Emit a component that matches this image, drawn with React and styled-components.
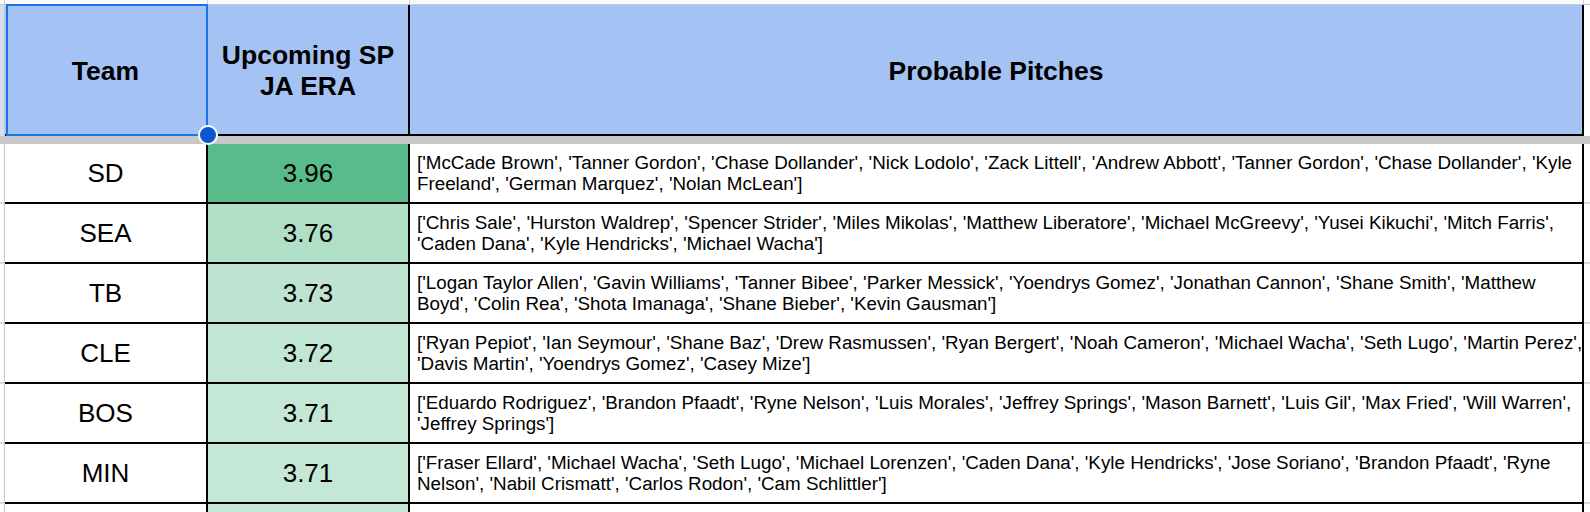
import React from 'react';
import styled, { createGlobalStyle } from 'styled-components';

const GlobalStyle = createGlobalStyle`
  *, *::before, *::after { box-sizing: border-box; }
  html, body { margin: 0; padding: 0; background: #fff; }
  body {
    font-family: "Liberation Sans", Arial, sans-serif;
    color: #000;
    overflow: hidden;
  }
`;

// gutter | Team | ERA | Probable Pitches | gutter
const COLS = '5px 203px 202px 1174px 6px';

const Sheet = styled.div`
  width: 1590px;
  height: 512px;
  overflow: hidden;
  display: flex;
  flex-direction: column;
`;

const Row = styled.div`
  display: grid;
  grid-template-columns: ${COLS};
  height: ${(p) => p.$height}px;
  flex: none;
`;

const Gutter = styled.div`
  background: ${(p) => p.$bg || '#fff'};
  border-right: ${(p) => (p.$left ? '1px solid #c7c7c7' : 'none')};
  border-bottom: ${(p) => (p.$tick ? '2px solid #dadada' : 'none')};
`;

const StripCell = styled.div`
  background: #fafafa;
  border-bottom: 1px solid #c7c7c7;
  border-right: ${(p) => (p.$line ? '1px solid #d0d0d0' : 'none')};
`;

const HeaderCell = styled.div`
  position: relative;
  display: flex;
  align-items: center;
  justify-content: center;
  text-align: center;
  padding-top: 3px;
  background: #a4c2f4;
  border-right: 2px solid #000;
  border-bottom: 2px solid #000;
  font-weight: bold;
  font-size: 26.5px;
  line-height: 31px;
`;

const Selection = styled.div`
  position: absolute;
  top: -1px;
  left: 1px;
  right: -2px;
  bottom: -2px;
  border: 2px solid #1a73e8;
  pointer-events: none;
  z-index: 2;
`;

const Handle = styled.div`
  position: absolute;
  right: -12px;
  bottom: -11px;
  width: 20px;
  height: 20px;
  border-radius: 50%;
  background: #0b57d0;
  border: 2px solid #fff;
`;

const FreezeBar = styled.div`
  flex: none;
  height: 8px;
  background: #c7c7c7;
`;

const Cell = styled.div`
  display: flex;
  align-items: center;
  justify-content: center;
  background: ${(p) => p.$bg || '#fff'};
  border-right: 2px solid #000;
  border-bottom: ${(p) => (p.$open ? 'none' : '2px solid #000')};
  font-size: 26px;
  line-height: 30px;
  overflow: hidden;
`;

const PitchCell = styled(Cell)`
  flex-direction: column;
  align-items: flex-start;
  justify-content: center;
  padding: 0 1px 0 7px;
  font-size: 18.8px;
  line-height: 21.5px;
`;

const Line = styled.span`
  display: block;
  white-space: nowrap;
`;

const rows = [
  {
    team: 'SD',
    era: '3.96',
    bg: '#57bb8a',
    pitches: [
      "['McCade Brown', 'Tanner Gordon', 'Chase Dollander', 'Nick Lodolo', 'Zack Littell', 'Andrew Abbott', 'Tanner Gordon', 'Chase Dollander', 'Kyle",
      "Freeland', 'German Marquez', 'Nolan McLean']",
    ],
  },
  {
    team: 'SEA',
    era: '3.76',
    bg: '#b0dfc8',
    pitches: [
      "['Chris Sale', 'Hurston Waldrep', 'Spencer Strider', 'Miles Mikolas', 'Matthew Liberatore', 'Michael McGreevy', 'Yusei Kikuchi', 'Mitch Farris',",
      "'Caden Dana', 'Kyle Hendricks', 'Michael Wacha']",
    ],
  },
  {
    team: 'TB',
    era: '3.73',
    bg: '#bee4d1',
    pitches: [
      "['Logan Taylor Allen', 'Gavin Williams', 'Tanner Bibee', 'Parker Messick', 'Yoendrys Gomez', 'Jonathan Cannon', 'Shane Smith', 'Matthew",
      "Boyd', 'Colin Rea', 'Shota Imanaga', 'Shane Bieber', 'Kevin Gausman']",
    ],
  },
  {
    team: 'CLE',
    era: '3.72',
    bg: '#c1e6d3',
    pitches: [
      "['Ryan Pepiot', 'Ian Seymour', 'Shane Baz', 'Drew Rasmussen', 'Ryan Bergert', 'Noah Cameron', 'Michael Wacha', 'Seth Lugo', 'Martin Perez',",
      "'Davis Martin', 'Yoendrys Gomez', 'Casey Mize']",
    ],
  },
  {
    team: 'BOS',
    era: '3.71',
    bg: '#c4e7d6',
    pitches: [
      "['Eduardo Rodriguez', 'Brandon Pfaadt', 'Ryne Nelson', 'Luis Morales', 'Jeffrey Springs', 'Mason Barnett', 'Luis Gil', 'Max Fried', 'Will Warren',",
      "'Jeffrey Springs']",
    ],
  },
  {
    team: 'MIN',
    era: '3.71',
    bg: '#c4e7d6',
    pitches: [
      "['Fraser Ellard', 'Michael Wacha', 'Seth Lugo', 'Michael Lorenzen', 'Caden Dana', 'Kyle Hendricks', 'Jose Soriano', 'Brandon Pfaadt', 'Ryne",
      "Nelson', 'Nabil Crismatt', 'Carlos Rodon', 'Cam Schlittler']",
    ],
  },
];

const App = () => {
  return (
    <>
      <GlobalStyle />
      <Sheet>
        <Row $height={5}>
          <StripCell $line />
          <StripCell $line />
          <StripCell $line />
          <StripCell $line />
          <StripCell />
        </Row>

        <Row $height={131}>
          <Gutter $left $bg="#d6dfec" />
          <HeaderCell>
            Team
            <Selection>
              <Handle />
            </Selection>
          </HeaderCell>
          <HeaderCell>
            Upcoming SP
            <br />
            JA ERA
          </HeaderCell>
          <HeaderCell>Probable Pitches</HeaderCell>
          <Gutter />
        </Row>

        <FreezeBar />

        {rows.map((r) => (
          <Row key={r.team} $height={60}>
            <Gutter $left $tick />
            <Cell>{r.team}</Cell>
            <Cell $bg={r.bg}>{r.era}</Cell>
            <PitchCell>
              {r.pitches.map((line) => (
                <Line key={line}>{line}</Line>
              ))}
            </PitchCell>
            <Gutter $tick />
          </Row>
        ))}

        <Row $height={8}>
          <Gutter $left />
          <Cell $open />
          <Cell $open $bg="#c6e8d7" />
          <PitchCell $open />
          <Gutter />
        </Row>
      </Sheet>
    </>
  );
};

export default App;
